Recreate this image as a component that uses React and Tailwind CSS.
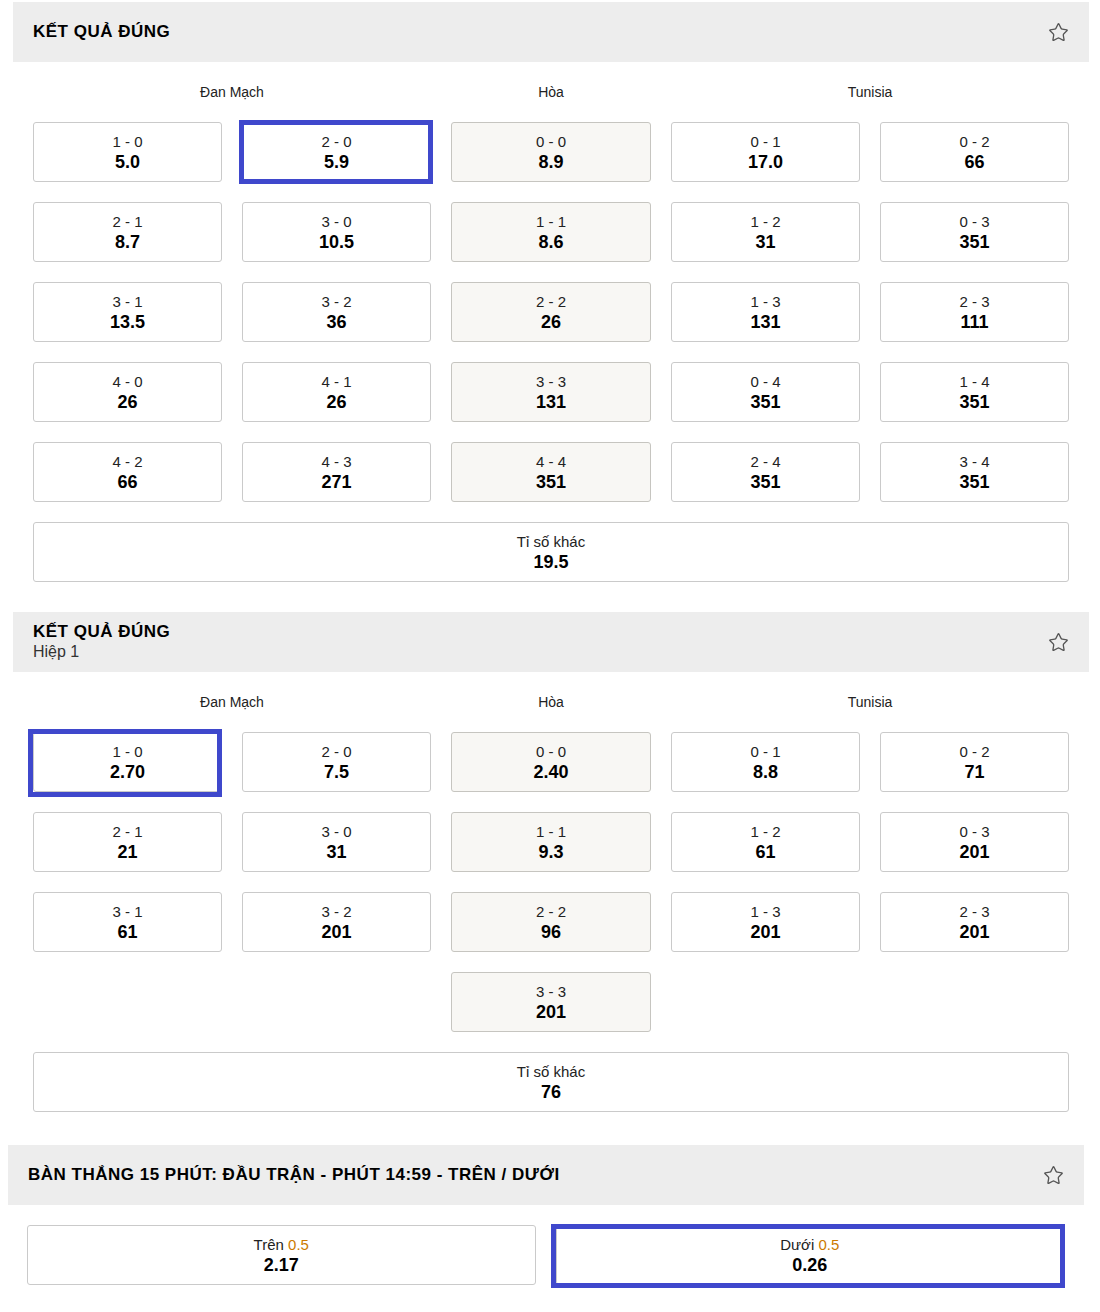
import { Star } from 'lucide-react';

// odds grids: [label, odd] per cell, middle column is the draw column
const fullTime = [
  [['1 - 0', '5.0'], ['2 - 0', '5.9'], ['0 - 0', '8.9'], ['0 - 1', '17.0'], ['0 - 2', '66']],
  [['2 - 1', '8.7'], ['3 - 0', '10.5'], ['1 - 1', '8.6'], ['1 - 2', '31'], ['0 - 3', '351']],
  [['3 - 1', '13.5'], ['3 - 2', '36'], ['2 - 2', '26'], ['1 - 3', '131'], ['2 - 3', '111']],
  [['4 - 0', '26'], ['4 - 1', '26'], ['3 - 3', '131'], ['0 - 4', '351'], ['1 - 4', '351']],
  [['4 - 2', '66'], ['4 - 3', '271'], ['4 - 4', '351'], ['2 - 4', '351'], ['3 - 4', '351']],
];

const firstHalf = [
  [['1 - 0', '2.70'], ['2 - 0', '7.5'], ['0 - 0', '2.40'], ['0 - 1', '8.8'], ['0 - 2', '71']],
  [['2 - 1', '21'], ['3 - 0', '31'], ['1 - 1', '9.3'], ['1 - 2', '61'], ['0 - 3', '201']],
  [['3 - 1', '61'], ['3 - 2', '201'], ['2 - 2', '96'], ['1 - 3', '201'], ['2 - 3', '201']],
];

const Cell = ({ label, odd, mid, sel }) => (
  <div
    className={`relative h-[60px] rounded-[3px] border flex flex-col items-center justify-center ${
      mid ? 'bg-[#f8f7f4] border-[#c6c5c0]' : 'bg-white border-[#cacaca]'
    }`}
  >
    <div className="text-[15px] leading-5 text-[#222]">{label}</div>
    <div className="text-[18px] font-bold leading-5 text-black">{odd}</div>
    {sel && <div className={`absolute border-[5px] border-[#3f48cc] ${sel}`} />}
  </div>
);

const Header = ({ title, sub }) => (
  <div className="h-[60px] bg-[#ededed] flex items-center justify-between px-5">
    <div>
      <div className="text-[17px] font-bold tracking-[0.5px] leading-5 text-black">{title}</div>
      {sub && <div className="text-[16px] leading-5 text-[#333]">{sub}</div>}
    </div>
    <Star size={21} strokeWidth={1.5} className="text-[#555]" />
  </div>
);

const cols = 'grid grid-cols-[189px_189px_200px_189px_189px] gap-x-5';

const Teams = () => (
  <div className={`${cols} h-[60px] items-center text-center text-[14px] text-[#222]`}>
    <div className="col-span-2">Đan Mạch</div>
    <div>Hòa</div>
    <div className="col-span-2">Tunisia</div>
  </div>
);

export default function App() {
  return (
    <div className="w-[1100px] bg-white pt-[2px] pb-6 font-['Liberation_Sans',Arial,sans-serif]">
      {/* full time */}
      <section className="ml-[13px] w-[1076px]">
        <Header title="KẾT QUẢ ĐÚNG" />
        <div className="px-5">
          <Teams />
          <div className={`${cols} gap-y-5`}>
            {fullTime.flat().map(([l, o], i) => (
              <Cell
                key={i}
                label={l}
                odd={o}
                mid={i % 5 === 2}
                sel={i === 1 ? '-left-[4px] -top-[3px] -right-[3px] -bottom-[3px]' : null}
              />
            ))}
          </div>
          <div className="mt-5">
            <Cell label="Tỉ số khác" odd="19.5" />
          </div>
        </div>
      </section>

      {/* first half */}
      <section className="ml-[13px] w-[1076px] mt-[30px]">
        <Header title="KẾT QUẢ ĐÚNG" sub="Hiệp 1" />
        <div className="px-5">
          <Teams />
          <div className={`${cols} gap-y-5`}>
            {firstHalf.flat().map(([l, o], i) => (
              <Cell
                key={i}
                label={l}
                odd={o}
                mid={i % 5 === 2}
                sel={i === 0 ? '-left-[6px] -top-[4px] -right-[1px] -bottom-[6px]' : null}
              />
            ))}
            <div className="col-start-3">
              <Cell label="3 - 3" odd="201" mid />
            </div>
          </div>
          <div className="mt-5">
            <Cell label="Tỉ số khác" odd="76" />
          </div>
        </div>
      </section>

      {/* 15 min over/under */}
      <section className="ml-[8px] w-[1076px] mt-[33px]">
        <Header title="BÀN THẮNG 15 PHÚT: ĐẦU TRẬN - PHÚT 14:59 - TRÊN / DƯỚI" />
        <div className="pl-[19px] pr-5 pt-5 grid grid-cols-2 gap-5">
          <Cell
            label={<>Trên <span className="text-[#cc7a00]">0.5</span></>}
            odd="2.17"
          />
          <Cell
            label={<>Dưới <span className="text-[#cc7a00]">0.5</span></>}
            odd="0.26"
            sel="-left-[6px] -top-[2px] -right-[2px] -bottom-[4px]"
          />
        </div>
      </section>
    </div>
  );
}
